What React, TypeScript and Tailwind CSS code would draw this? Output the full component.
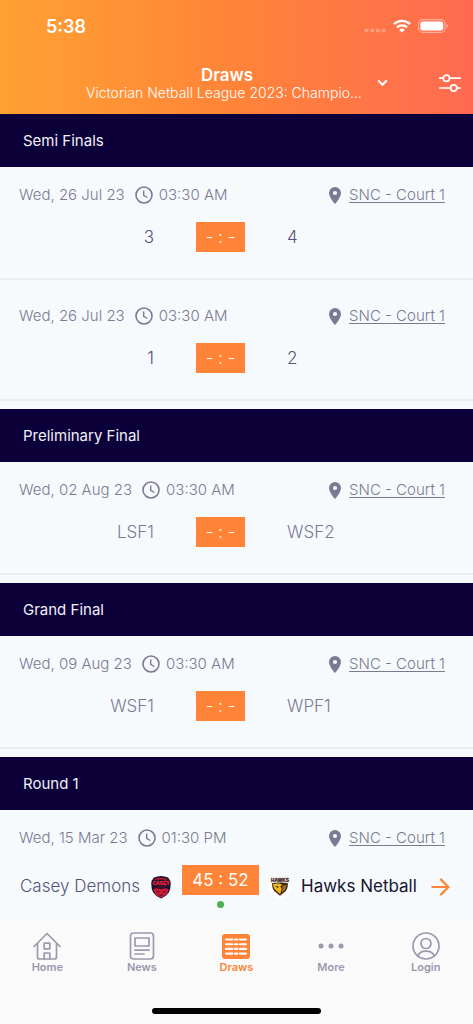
import type { ReactNode } from 'react';

interface Team {
  name: string;
  logo?: ReactNode;
  tone: string;
}

interface Match {
  date: string;
  time: string;
  home: Team;
  away: Team;
  score: string;
  final?: boolean;
}

interface Round {
  title: string;
  matches: Match[];
}

const muted = 'text-[#7b7a93]';
const seed = 'text-[#55537a]';

const rounds: Round[] = [
  {
    title: 'Semi Finals',
    matches: [
      { date: 'Wed, 26 Jul 23', time: '03:30 AM', home: { name: '3', tone: seed }, away: { name: '4', tone: seed }, score: '- : -' },
      { date: 'Wed, 26 Jul 23', time: '03:30 AM', home: { name: '1', tone: seed }, away: { name: '2', tone: seed }, score: '- : -' },
    ],
  },
  {
    title: 'Preliminary Final',
    matches: [
      { date: 'Wed, 02 Aug 23', time: '03:30 AM', home: { name: 'LSF1', tone: muted }, away: { name: 'WSF2', tone: muted }, score: '- : -' },
    ],
  },
  {
    title: 'Grand Final',
    matches: [
      { date: 'Wed, 09 Aug 23', time: '03:30 AM', home: { name: 'WSF1', tone: muted }, away: { name: 'WPF1', tone: muted }, score: '- : -' },
    ],
  },
  {
    title: 'Round 1',
    matches: [
      {
        date: 'Wed, 15 Mar 23',
        time: '01:30 PM',
        home: { name: 'Casey Demons', tone: seed, logo: <DemonsLogo /> },
        away: { name: 'Hawks Netball', tone: 'text-[#15132f] font-normal', logo: <HawksLogo /> },
        score: '45 : 52',
        final: true,
      },
    ],
  },
];

export default function App() {
  return (
    <div className="flex h-screen flex-col overflow-hidden bg-[#f6fafd] font-['Inter',sans-serif]">
      <Header />
      <main className="min-h-0 flex-1 overflow-hidden">
        {rounds.map((r) => (
          <section key={r.title}>
            <h2 className="flex h-[53px] items-center bg-[#0b0039] px-[23px] pt-0.5 text-[15px] text-[#f1f0f7]">{r.title}</h2>
            {r.matches.map((m, i) => (
              <MatchCard key={i} {...m} />
            ))}
          </section>
        ))}
      </main>
      <TabBar />
    </div>
  );
}

function Header() {
  return (
    <header className="shrink-0 bg-linear-to-r from-[#ffa133] via-[#ff8338] to-[#ff6a50] text-white">
      <div className="flex h-[52px] items-center justify-between pr-[25px] pl-[46px]">
        <span className="pt-0.5 text-lg font-semibold">5:38</span>
        <div className="flex items-center gap-[7px]">
          <svg viewBox="0 0 22 14" className="h-[14px] w-[22px]" fill="#fff" fillOpacity="0.3">
            <circle cx="2.5" cy="11.5" r="2.1" />
            <circle cx="8.2" cy="11.5" r="2.1" />
            <circle cx="13.8" cy="11.5" r="2.1" />
            <circle cx="19.5" cy="11.5" r="2.1" />
          </svg>
          <svg viewBox="0 0 18 14" className="h-[14px] w-[18px]" fill="none" stroke="#fff" strokeWidth="2.4">
            <path d="M1 5.2a11.4 11.4 0 0 1 16 0" />
            <path d="M4 8.4a7.1 7.1 0 0 1 10 0" />
            <path d="M9 13.6 6.2 10.9a4 4 0 0 1 5.6 0z" fill="#fff" stroke="none" />
          </svg>
          <svg viewBox="0 0 30 14" className="h-[14px] w-[30px]">
            <rect x="0.6" y="0.6" width="26.4" height="12.8" rx="4" fill="none" stroke="#fff" strokeOpacity="0.45" strokeWidth="1.1" />
            <rect x="2.4" y="2.4" width="22.8" height="9.2" rx="2.4" fill="#fff" />
            <path d="M28.4 4.8v4.4c.9-.4 1.4-1.2 1.4-2.2s-.5-1.8-1.4-2.2z" fill="#fff" fillOpacity="0.5" />
          </svg>
        </div>
      </div>
      <div className="flex h-[62px] items-center pr-3 pl-[86px]">
        <button type="button" className="flex min-w-0 flex-1 items-center gap-[9px] text-left">
          <span className="min-w-0 flex-1">
            <span className="block text-center text-[17px] leading-5 font-semibold">Draws</span>
            <span className="block truncate text-sm leading-4 font-light">Victorian Netball League 2023: Champio...</span>
          </span>
          <svg viewBox="0 0 11 8" className="h-2 w-[11px]" fill="none" stroke="currentColor" strokeWidth="2.1" strokeLinecap="round" strokeLinejoin="round">
            <path d="M1.8 2 5.5 5.7 9.2 2" />
          </svg>
        </button>
        <button type="button" aria-label="Filters" className="ml-[51px] shrink-0">
          <svg viewBox="0 0 22 18" className="h-[18px] w-[22px]" fill="none" stroke="currentColor" strokeWidth="1.7" strokeLinecap="round">
            <path d="M.9 4.2h3.4M10.6 4.2h10.6M.9 14h10.6M17.8 14h3.4" />
            <circle cx="7.4" cy="4.2" r="3.1" />
            <circle cx="14.7" cy="14" r="3.1" />
          </svg>
        </button>
      </div>
    </header>
  );
}

function MatchCard({ date, time, home, away, score, final }: Match) {
  return (
    <article className="mb-2 border-b-2 border-[#e9eef1] pt-[18px] pb-[26px]">
      <div className={`flex h-5 items-center pr-7 pl-[19px] text-[15px] font-light ${muted}`}>
        <span>{date}</span>
        <svg viewBox="0 0 18 18" className="mr-[6px] ml-[10px] h-[18px] w-[18px]" fill="none" stroke="currentColor" strokeWidth="1.6">
          <circle cx="9" cy="9" r="8" />
          <path d="M8.7 4.6v4.7l3.6 2.2" strokeWidth="1.4" />
        </svg>
        <span>{time}</span>
        <svg viewBox="0 0 12 17" className="mr-2 ml-auto h-[17px] w-3" fill="currentColor">
          <path fillRule="evenodd" d="M6 0a6 6 0 0 0-6 6c0 4.5 6 11 6 11s6-6.5 6-11a6 6 0 0 0-6-6zm0 8.1a2.100 2.100 0 1 1 0-4.200 2.100 2.100 0 0 1 0 4.200z" />
        </svg>
        <a href="#court" className="underline underline-offset-2">
          SNC - Court 1
        </a>
      </div>
      <div className="mt-[17px] flex items-center pr-[23px] pl-[19px] text-[17px] font-light">
        <div className={`flex flex-1 items-center justify-end gap-[10px] whitespace-nowrap ${home.tone} ${home.logo ? 'pr-[10px]' : 'pt-0.5 pr-7'}`}>
          {home.name}
          {home.logo}
        </div>
        <div className="flex w-[77px] flex-col items-center gap-[6px]">
          <span className={`flex h-[30px] items-center bg-[#ff8437] px-[10px] pt-0.5 whitespace-nowrap text-white ${final ? 'font-normal' : 'font-light'}`}>
            {score}
          </span>
          {final && <span className="size-[7px] rounded-full bg-[#4caf50]" />}
        </div>
        <div className={`flex flex-1 items-center gap-[10px] whitespace-nowrap ${away.tone} ${away.logo ? 'pl-[10px]' : 'pt-0.5 pl-7'}`}>
          {away.logo}
          {away.name}
        </div>
        <div className="flex w-7 justify-end">
          {final && (
            <a href="#match" aria-label="Match details">
              <svg viewBox="0 0 19 18" className="h-[18px] w-[19px]" fill="none" stroke="#ff8437" strokeWidth="2.2">
                <path d="M.5 9h17M9.3.9 17.4 9l-8.1 8.1" />
              </svg>
            </a>
          )}
        </div>
      </div>
    </article>
  );
}

function DemonsLogo() {
  return (
    <svg viewBox="0 0 22 24" className="h-6 w-[22px] shrink-0">
      <path d="M4 2.5Q11-.7 18 2.5L20.500 6q.8 7-1.700 11.500Q15.500 22 11 23.500 6.500 22 3.200 17.500.7 13 1.500 6z" fill="#17122d" />
      <path d="M4.500 4q6.500-3.200 13 0l-.6 1.200q-5.900-1.500-11.800 0z" fill="#b3182b" />
      <text x="11" y="10" textAnchor="middle" fontSize="5" fontWeight="700" fill="#ee2139" stroke="#ee2139" strokeWidth=".3" className="font-['Liberation_Sans',sans-serif]">
        CASEY
      </text>
      <path d="M3.300 14 7 13.300q4 1.200 8 0l3.700.7q-.4 3.500-3 6L11 22.800 6.300 20q-2.600-2.500-3-6z" fill="#cf1c32" />
      <path d="m6.300 15.800 3 .8-.4 1-2-.4zM15.700 15.800l-3 .8.4 1 2-.4zM8.500 19.500h5l-1 .9h-3z" fill="#361026" />
      <path d="M6 12h10" stroke="#6e1730" strokeWidth=".8" />
    </svg>
  );
}

function HawksLogo() {
  return (
    <svg viewBox="0 0 22 22" className="size-[22px] shrink-0">
      <circle cx="11" cy="11" r="11" fill="#fff" />
      <path d="M3 7.200Q11 5.800 19 7.200q0 5-2.200 7.700L11 19.800l-5.800-4.900Q3 12.200 3 7.200z" fill="#3a2411" />
      <path d="M4 8q3.500-.8 6.500-.4l3.200 1.400-2.500 1.300 1.500 2.700-1.500 5.200-4.800-4.100Q4.200 12 4 8z" fill="#f2b51d" />
      <path d="m13.500 10 4-1.600q-.2 3.600-1.600 5.500l-3 2.700z" fill="#9b6d24" />
      <path d="m6 9.800 4 .9-1.200 1.300z" fill="#3a2411" />
      <text x="11" y="6.200" textAnchor="middle" fontSize="4.800" fontWeight="700" fill="#3b1613" stroke="#3b1613" strokeWidth=".3" className="font-['Liberation_Sans',sans-serif]">
        HAWKS
      </text>
    </svg>
  );
}

const tabs: { label: string; icon: ReactNode; active?: boolean }[] = [
  {
    label: 'Home',
    icon: (
      <>
        <path d="M1 14.500 14 1.500l13 13M4.500 11.500V25q0 2 2 2h15q2 0 2-2V11.500" />
        <path d="M11.200 11.200h5.600v5.600h-5.600zM11.200 27v-6h5.600v6" />
      </>
    ),
  },
  {
    label: 'News',
    icon: (
      <>
        <rect x="2.500" y="1" width="23" height="26" rx="3" />
        <path d="M7 6h14v8H7zM7 18.200h14M7 22h9" />
      </>
    ),
  },
  {
    label: 'Draws',
    active: true,
    icon: (
      <>
        <rect x="0" y="2" width="28" height="25" rx="3" fill="currentColor" stroke="none" />
        <path d="M4 7.500h6.500M13 7.500h2.500M18 7.500h6M4 12.200h6.500M13 12.200h2.500M18 12.200h6M4 16.900h6.500M13 16.900h2.500M18 16.900h6M4 21.600h6.500M13 21.600h2.500M18 21.600h6" stroke="#fafafa" strokeWidth="2.100" />
      </>
    ),
  },
  {
    label: 'More',
    icon: (
      <g fill="currentColor" stroke="none">
        <circle cx="4" cy="14" r="2.500" />
        <circle cx="14" cy="14" r="2.500" />
        <circle cx="24" cy="14" r="2.500" />
      </g>
    ),
  },
  {
    label: 'Login',
    icon: (
      <>
        <circle cx="14" cy="14" r="13" />
        <circle cx="14" cy="11.500" r="5" />
        <path d="M5.600 24q2.300-4.800 8.400-4.800t8.400 4.800" />
      </>
    ),
  },
];

function TabBar() {
  return (
    <nav className="shrink-0 bg-[#fafafa] pt-3">
      <div className="grid grid-cols-5">
        {tabs.map((t) => (
          <a
            key={t.label}
            href={`#${t.label.toLowerCase()}`}
            className={`flex flex-col items-center text-[11px] leading-[14px] font-semibold ${t.active ? 'text-[#ff8437]' : 'text-[#9b98b0]'}`}
          >
            <svg viewBox="0 0 28 28" className="size-7" fill="none" stroke="currentColor" strokeWidth="1.700" strokeLinejoin="round" strokeLinecap="round">
              {t.icon}
            </svg>
            {t.label}
          </a>
        ))}
      </div>
      {/* Home indicator */}
      <div className="mx-auto mt-[34px] mb-[10px] h-[6px] w-[169px] rounded-full bg-black" />
    </nav>
  );
}
